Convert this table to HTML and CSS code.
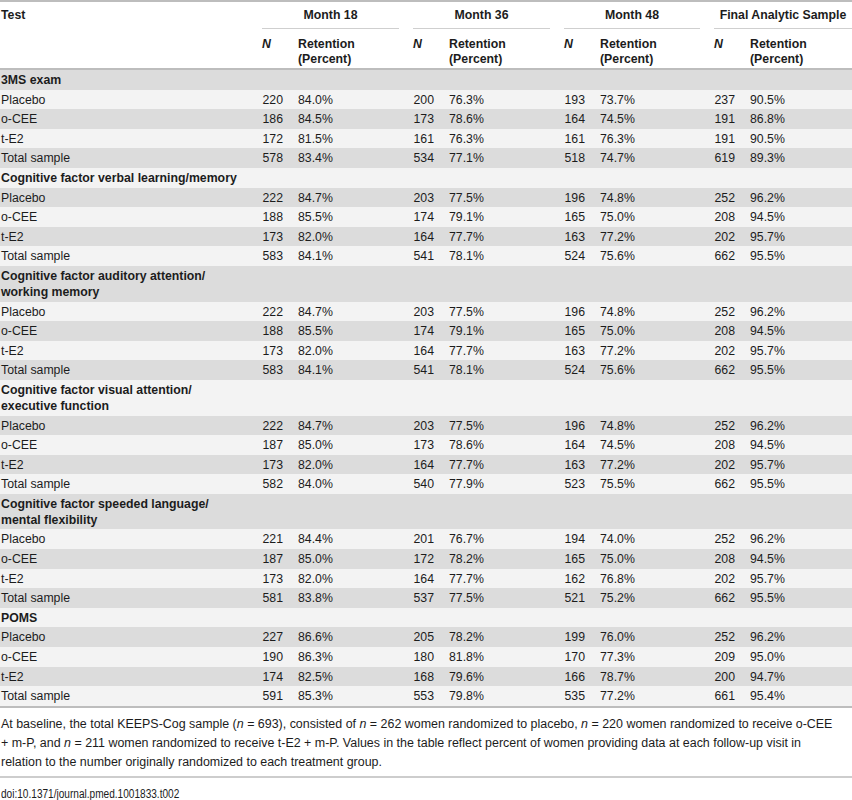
FILE: index.html
```html
<!DOCTYPE html>
<html lang="en">
<head>
    <meta charset="UTF-8">
    <title>KEEPS-Cog retention by visit</title>
    <link rel="stylesheet" href="styles.css">
</head>
<body>

<table class="retencao">
    <colgroup>
        <col class="c-test">
        <col class="c-n"><col class="c-ret">
        <col class="c-n"><col class="c-ret">
        <col class="c-n"><col class="c-ret2">
        <col class="c-n"><col class="c-last">
    </colgroup>
    <thead>
        <tr class="grupos">
            <th class="test" rowspan="2">Test</th>
            <th colspan="2" class="grupo"><div>Month 18</div></th>
            <th colspan="2" class="grupo"><div>Month 36</div></th>
            <th colspan="2" class="grupo"><div>Month 48</div></th>
            <th colspan="2" class="grupo ultimo"><div>Final Analytic Sample</div></th>
        </tr>
        <tr class="sub">
            <th class="n"><i>N</i></th><th class="ret">Retention<br>(Percent)</th>
            <th class="n"><i>N</i></th><th class="ret">Retention<br>(Percent)</th>
            <th class="n"><i>N</i></th><th class="ret">Retention<br>(Percent)</th>
            <th class="n"><i>N</i></th><th class="ret">Retention<br>(Percent)</th>
        </tr>
    </thead>
    <tbody>
        <tr class="secao"><td colspan="9">3MS exam</td></tr>
        <tr><td>Placebo</td><td class="n">220</td><td>84.0%</td><td class="n">200</td><td>76.3%</td><td class="n">193</td><td>73.7%</td><td class="n">237</td><td>90.5%</td></tr>
        <tr><td>o-CEE</td><td class="n">186</td><td>84.5%</td><td class="n">173</td><td>78.6%</td><td class="n">164</td><td>74.5%</td><td class="n">191</td><td>86.8%</td></tr>
        <tr><td>t-E2</td><td class="n">172</td><td>81.5%</td><td class="n">161</td><td>76.3%</td><td class="n">161</td><td>76.3%</td><td class="n">191</td><td>90.5%</td></tr>
        <tr><td>Total sample</td><td class="n">578</td><td>83.4%</td><td class="n">534</td><td>77.1%</td><td class="n">518</td><td>74.7%</td><td class="n">619</td><td>89.3%</td></tr>

        <tr class="secao"><td colspan="9">Cognitive factor verbal learning/memory</td></tr>
        <tr><td>Placebo</td><td class="n">222</td><td>84.7%</td><td class="n">203</td><td>77.5%</td><td class="n">196</td><td>74.8%</td><td class="n">252</td><td>96.2%</td></tr>
        <tr><td>o-CEE</td><td class="n">188</td><td>85.5%</td><td class="n">174</td><td>79.1%</td><td class="n">165</td><td>75.0%</td><td class="n">208</td><td>94.5%</td></tr>
        <tr><td>t-E2</td><td class="n">173</td><td>82.0%</td><td class="n">164</td><td>77.7%</td><td class="n">163</td><td>77.2%</td><td class="n">202</td><td>95.7%</td></tr>
        <tr><td>Total sample</td><td class="n">583</td><td>84.1%</td><td class="n">541</td><td>78.1%</td><td class="n">524</td><td>75.6%</td><td class="n">662</td><td>95.5%</td></tr>

        <tr class="secao"><td colspan="9">Cognitive factor auditory attention/<br>working memory</td></tr>
        <tr><td>Placebo</td><td class="n">222</td><td>84.7%</td><td class="n">203</td><td>77.5%</td><td class="n">196</td><td>74.8%</td><td class="n">252</td><td>96.2%</td></tr>
        <tr><td>o-CEE</td><td class="n">188</td><td>85.5%</td><td class="n">174</td><td>79.1%</td><td class="n">165</td><td>75.0%</td><td class="n">208</td><td>94.5%</td></tr>
        <tr><td>t-E2</td><td class="n">173</td><td>82.0%</td><td class="n">164</td><td>77.7%</td><td class="n">163</td><td>77.2%</td><td class="n">202</td><td>95.7%</td></tr>
        <tr><td>Total sample</td><td class="n">583</td><td>84.1%</td><td class="n">541</td><td>78.1%</td><td class="n">524</td><td>75.6%</td><td class="n">662</td><td>95.5%</td></tr>

        <tr class="secao"><td colspan="9">Cognitive factor visual attention/<br>executive function</td></tr>
        <tr><td>Placebo</td><td class="n">222</td><td>84.7%</td><td class="n">203</td><td>77.5%</td><td class="n">196</td><td>74.8%</td><td class="n">252</td><td>96.2%</td></tr>
        <tr><td>o-CEE</td><td class="n">187</td><td>85.0%</td><td class="n">173</td><td>78.6%</td><td class="n">164</td><td>74.5%</td><td class="n">208</td><td>94.5%</td></tr>
        <tr><td>t-E2</td><td class="n">173</td><td>82.0%</td><td class="n">164</td><td>77.7%</td><td class="n">163</td><td>77.2%</td><td class="n">202</td><td>95.7%</td></tr>
        <tr><td>Total sample</td><td class="n">582</td><td>84.0%</td><td class="n">540</td><td>77.9%</td><td class="n">523</td><td>75.5%</td><td class="n">662</td><td>95.5%</td></tr>

        <tr class="secao"><td colspan="9">Cognitive factor speeded language/<br>mental flexibility</td></tr>
        <tr><td>Placebo</td><td class="n">221</td><td>84.4%</td><td class="n">201</td><td>76.7%</td><td class="n">194</td><td>74.0%</td><td class="n">252</td><td>96.2%</td></tr>
        <tr><td>o-CEE</td><td class="n">187</td><td>85.0%</td><td class="n">172</td><td>78.2%</td><td class="n">165</td><td>75.0%</td><td class="n">208</td><td>94.5%</td></tr>
        <tr><td>t-E2</td><td class="n">173</td><td>82.0%</td><td class="n">164</td><td>77.7%</td><td class="n">162</td><td>76.8%</td><td class="n">202</td><td>95.7%</td></tr>
        <tr><td>Total sample</td><td class="n">581</td><td>83.8%</td><td class="n">537</td><td>77.5%</td><td class="n">521</td><td>75.2%</td><td class="n">662</td><td>95.5%</td></tr>

        <tr class="secao"><td colspan="9">POMS</td></tr>
        <tr><td>Placebo</td><td class="n">227</td><td>86.6%</td><td class="n">205</td><td>78.2%</td><td class="n">199</td><td>76.0%</td><td class="n">252</td><td>96.2%</td></tr>
        <tr><td>o-CEE</td><td class="n">190</td><td>86.3%</td><td class="n">180</td><td>81.8%</td><td class="n">170</td><td>77.3%</td><td class="n">209</td><td>95.0%</td></tr>
        <tr><td>t-E2</td><td class="n">174</td><td>82.5%</td><td class="n">168</td><td>79.6%</td><td class="n">166</td><td>78.7%</td><td class="n">200</td><td>94.7%</td></tr>
        <tr><td>Total sample</td><td class="n">591</td><td>85.3%</td><td class="n">553</td><td>79.8%</td><td class="n">535</td><td>77.2%</td><td class="n">661</td><td>95.4%</td></tr>
    </tbody>
</table>

<div class="nota">
    <p>At baseline, the total KEEPS-Cog sample (<i>n</i> = 693), consisted of <i>n</i> = 262 women randomized to placebo, <i>n</i> = 220 women randomized to receive o-CEE + m-P, and <i>n</i> = 211 women randomized to receive t-E2 + m-P. Values in the table reflect percent of women providing data at each follow-up visit in relation to the number originally randomized to each treatment group.</p>
</div>

<p class="doi"><span>doi:10.1371/journal.pmed.1001833.t002</span></p>

</body>
</html>
```

FILE: styles.css
```css
body {
    font-family: 'Liberation Sans', Arial, sans-serif;
    font-size: 12.3px;
    color: #1c1c1c;
    margin: 0;
    padding: 0;
    background-color: #fff;
    width: 852px;
}
.retencao {
    width: 852px;
    border-collapse: collapse;
    table-layout: fixed;
    border-top: 2px solid #bdbdbd;
    border-bottom: 2px solid #bdbdbd;
}
.c-test { width: 262px; }
.c-n { width: 36px; }
.c-ret { width: 115px; }
.c-ret2 { width: 114px; }
.c-last { width: 102px; }
.retencao th {
    font-weight: bold;
    text-align: left;
    vertical-align: top;
    padding: 0;
}
.retencao thead tr.sub {
    border-bottom: 2px solid #bdbdbd;
}
.retencao th.test {
    padding: 5px 0 0 1px;
    line-height: 16px;
}
.retencao th.grupo div {
    margin-right: 14px;
    padding: 5px 0 5px;
    line-height: 16px;
    text-align: center;
    border-bottom: 1px solid #cfcfcf;
}
.retencao th.ultimo div {
    margin-right: 0;
}
.retencao tr.sub th {
    padding: 8px 0 1px;
    line-height: 15px;
}
.retencao td {
    padding: 2px 0 1.6px;
    line-height: 16px;
    white-space: nowrap;
}
.retencao td:first-child {
    padding-left: 1px;
}
.retencao td.n {
    text-align: right;
    padding-right: 15px;
}
.retencao tr.secao td {
    font-weight: bold;
}
.retencao tbody tr:nth-child(odd) {
    background-color: #dcdcdc;
}
.retencao tbody tr:nth-child(even) {
    background-color: #f3f3f3;
}
.nota {
    padding: 7px 0 4px 1px;
    border-bottom: 2px solid #cdcdcd;
}
.nota p {
    margin: 0;
    width: 832px;
    font-size: 12.45px;
    line-height: 19px;
}
.doi {
    margin: 0;
    padding: 8px 0 0 1px;
    line-height: 16px;
}
.doi span {
    display: inline-block;
    transform: scaleX(0.82);
    transform-origin: left center;
}
```
